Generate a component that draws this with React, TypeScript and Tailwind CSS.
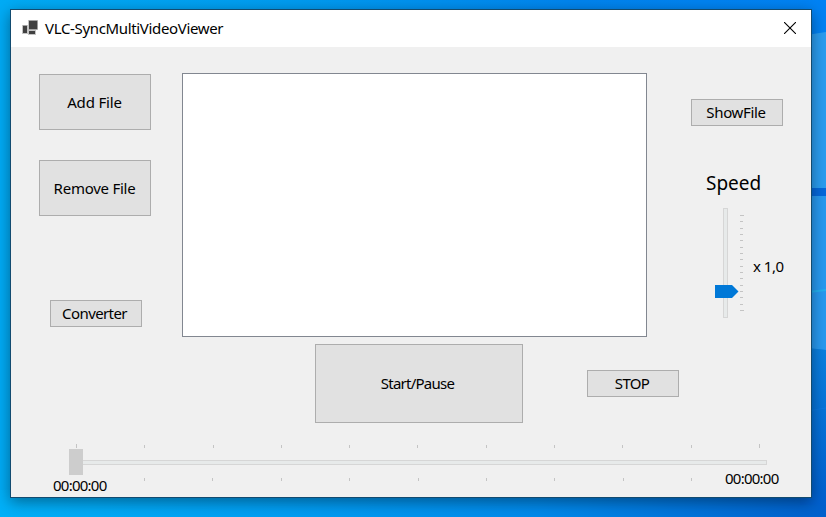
import type { ReactNode } from "react";

const SEEK_TICKS = Array.from({ length: 11 }, (_, i) => i);
const SPEED_TICKS = Array.from({ length: 16 }, (_, i) => i);

function Button({ className, children }: { className: string; children: ReactNode }) {
  return (
    <button
      className={`flex shrink-0 items-center justify-center border border-[#adadad] bg-[#e1e1e1] text-[15px] leading-5 whitespace-nowrap text-black ${className}`}
    >
      {children}
    </button>
  );
}

function Wallpaper() {
  return (
    <svg className="absolute inset-0" width="826" height="517" viewBox="0 0 826 517" aria-hidden="true">
      <defs>
        <linearGradient id="sky" x1="0" y1="0" x2="1" y2="0">
          <stop offset="0" stopColor="#00abf5" />
          <stop offset="0.35" stopColor="#009cf0" />
          <stop offset="0.7" stopColor="#0084ee" />
          <stop offset="1" stopColor="#0082f4" />
        </linearGradient>
        <linearGradient id="floor" x1="0" y1="0" x2="1" y2="0">
          <stop offset="0" stopColor="#00b0f8" />
          <stop offset="0.35" stopColor="#009df2" />
          <stop offset="0.65" stopColor="#0089ea" />
          <stop offset="1" stopColor="#0060cc" />
        </linearGradient>
        <linearGradient id="low" x1="0" y1="0" x2="0" y2="1">
          <stop offset="0" stopColor="#0a80e0" />
          <stop offset="1" stopColor="#0060cf" />
        </linearGradient>
      </defs>
      <rect width="826" height="517" fill="url(#sky)" />
      <rect y="490" width="826" height="27" fill="url(#floor)" />
      <path d="M800 36L826 32V188H800Z" fill="#2a9df0" />
      <rect x="800" y="188" width="26" height="8" fill="#0568dc" />
      <path d="M800 196H826V350L800 348Z" fill="#2799f0" />
      <path d="M800 293L826 290" stroke="#22b0f0" strokeWidth="2" />
      <path d="M800 347L826 350V505H800Z" fill="url(#low)" />
      <path d="M800 412L826 408" stroke="#0c78e0" />
    </svg>
  );
}

function TitleBar() {
  return (
    <header className="flex h-[37px] items-start bg-white pl-[11px]">
      <svg className="mt-2.5" width="17" height="16" viewBox="0 0 17 16" aria-hidden="true">
        <path d="M6 0h10v10h-2v5H6v-1H0V5h6z" fill="#c4c4c4" />
        <path d="M7 .7h8.3v8.6H7zM1 5.7h4V13H1zM7 11h6v3H7z" fill="#404040" />
      </svg>
      <h1 className="mt-2 ml-1.5 text-[15px] leading-5 tracking-[-0.34px]">VLC-SyncMultiVideoViewer</h1>
      <button className="mt-3 mr-[15px] ml-auto" aria-label="Close">
        <svg className="block" width="12" height="12" viewBox="0 0 12 12">
          <path d="M0 0l12 12M12 0L0 12" stroke="#000" strokeWidth="1.1" />
        </svg>
      </button>
    </header>
  );
}

function SpeedSlider() {
  return (
    <div className="flex">
      <div className="relative ml-8 h-[110px] w-[5px] shrink-0 border border-[#d6d6d6] bg-[#e7eaea]">
        <svg className="absolute top-[76px] -left-[9px]" width="24" height="13" viewBox="0 0 24 13">
          <path d="M0 0h17l6.5 6.5L17 13H0z" fill="#0078d7" />
        </svg>
      </div>
      <div className="mt-[7px] ml-3 flex h-24 w-1 shrink-0 flex-col justify-between">
        {SPEED_TICKS.map((i) => (
          <span key={i} className={`h-px bg-[#c4c4c4] ${i % 15 === 0 ? "w-1" : "w-[3px]"}`} />
        ))}
      </div>
      <span className="mt-12 ml-[9px] shrink-0 text-[15px] leading-5 tracking-[-0.5px] whitespace-nowrap">x 1,0</span>
    </div>
  );
}

function SeekBar() {
  return (
    <footer className="pt-[21px]">
      <div className="ml-[65px] flex h-1 w-[684px] items-end justify-between">
        {SEEK_TICKS.map((i) => (
          <span key={i} className={`w-px bg-[#c4c4c4] ${i % 10 === 0 ? "h-1" : "h-[3px]"}`} />
        ))}
      </div>
      <div className="relative mt-3 ml-[58px] h-[5px] w-[698px] border border-[#d6d6d6] bg-[#e7eaea]">
        <span className="absolute -top-3 -left-px h-[26px] w-[14px] bg-[#cdcdcd]" />
      </div>
      <div className="flex pl-[42px]">
        <span className="mt-2.5 w-[91px] text-[15px] leading-5 tracking-[-0.75px]">00:00:00</span>
        <div className="mt-[13px] flex h-[3px] w-[548px] justify-between">
          {SEEK_TICKS.slice(1, 10).map((i) => (
            <span key={i} className="w-px bg-[#c4c4c4]" />
          ))}
        </div>
        <span className="mt-[3px] ml-[33px] text-[15px] leading-5 tracking-[-0.75px]">00:00:00</span>
      </div>
    </footer>
  );
}

export default function App() {
  return (
    <div className="relative h-[517px] w-[826px] overflow-hidden font-['Noto_Sans','Open_Sans',sans-serif] text-black">
      <Wallpaper />
      <main className="absolute top-[9px] left-[10px] h-[489px] w-[802px] overflow-hidden border border-[#124b70] bg-[#f0f0f0] shadow-[0_4px_14px_rgba(0,0,0,0.4)]">
        <TitleBar />
        <div className="flex h-[297px] pl-7">
          <div className="w-28 pt-[27px]">
            <Button className="h-14 w-28 pr-px tracking-[-0.15px]">Add File</Button>
            <Button className="mt-[30px] h-14 w-28 pr-px tracking-[-0.25px]">Remove File</Button>
            <Button className="mt-[84px] ml-[11px] h-[27px] w-[92px] pr-[3px] pb-0.5 tracking-[-0.6px]">
              Converter
            </Button>
          </div>
          <div className="mt-[26px] ml-[31px] h-[264px] w-[465px] border border-[#828790] bg-white" />
          <div className="ml-11 w-[92px] pt-[52px]">
            <Button className="h-[27px] w-[92px] pr-0.5 pb-0.5 tracking-[-0.35px]">ShowFile</Button>
            <h2 className="mt-[43px] mb-[11px] ml-[15px] text-[19px] leading-7">Speed</h2>
            <SpeedSlider />
          </div>
        </div>
        <div className="flex h-[79px] pl-[304px]">
          <Button className="h-[79px] w-[208px] pr-[3px] pb-0.5 tracking-[-0.75px]">Start/Pause</Button>
          <Button className="mt-[26px] ml-16 h-[27px] w-[92px] pr-0.5 pb-0.5 tracking-[-0.7px]">STOP</Button>
        </div>
        <SeekBar />
      </main>
    </div>
  );
}
